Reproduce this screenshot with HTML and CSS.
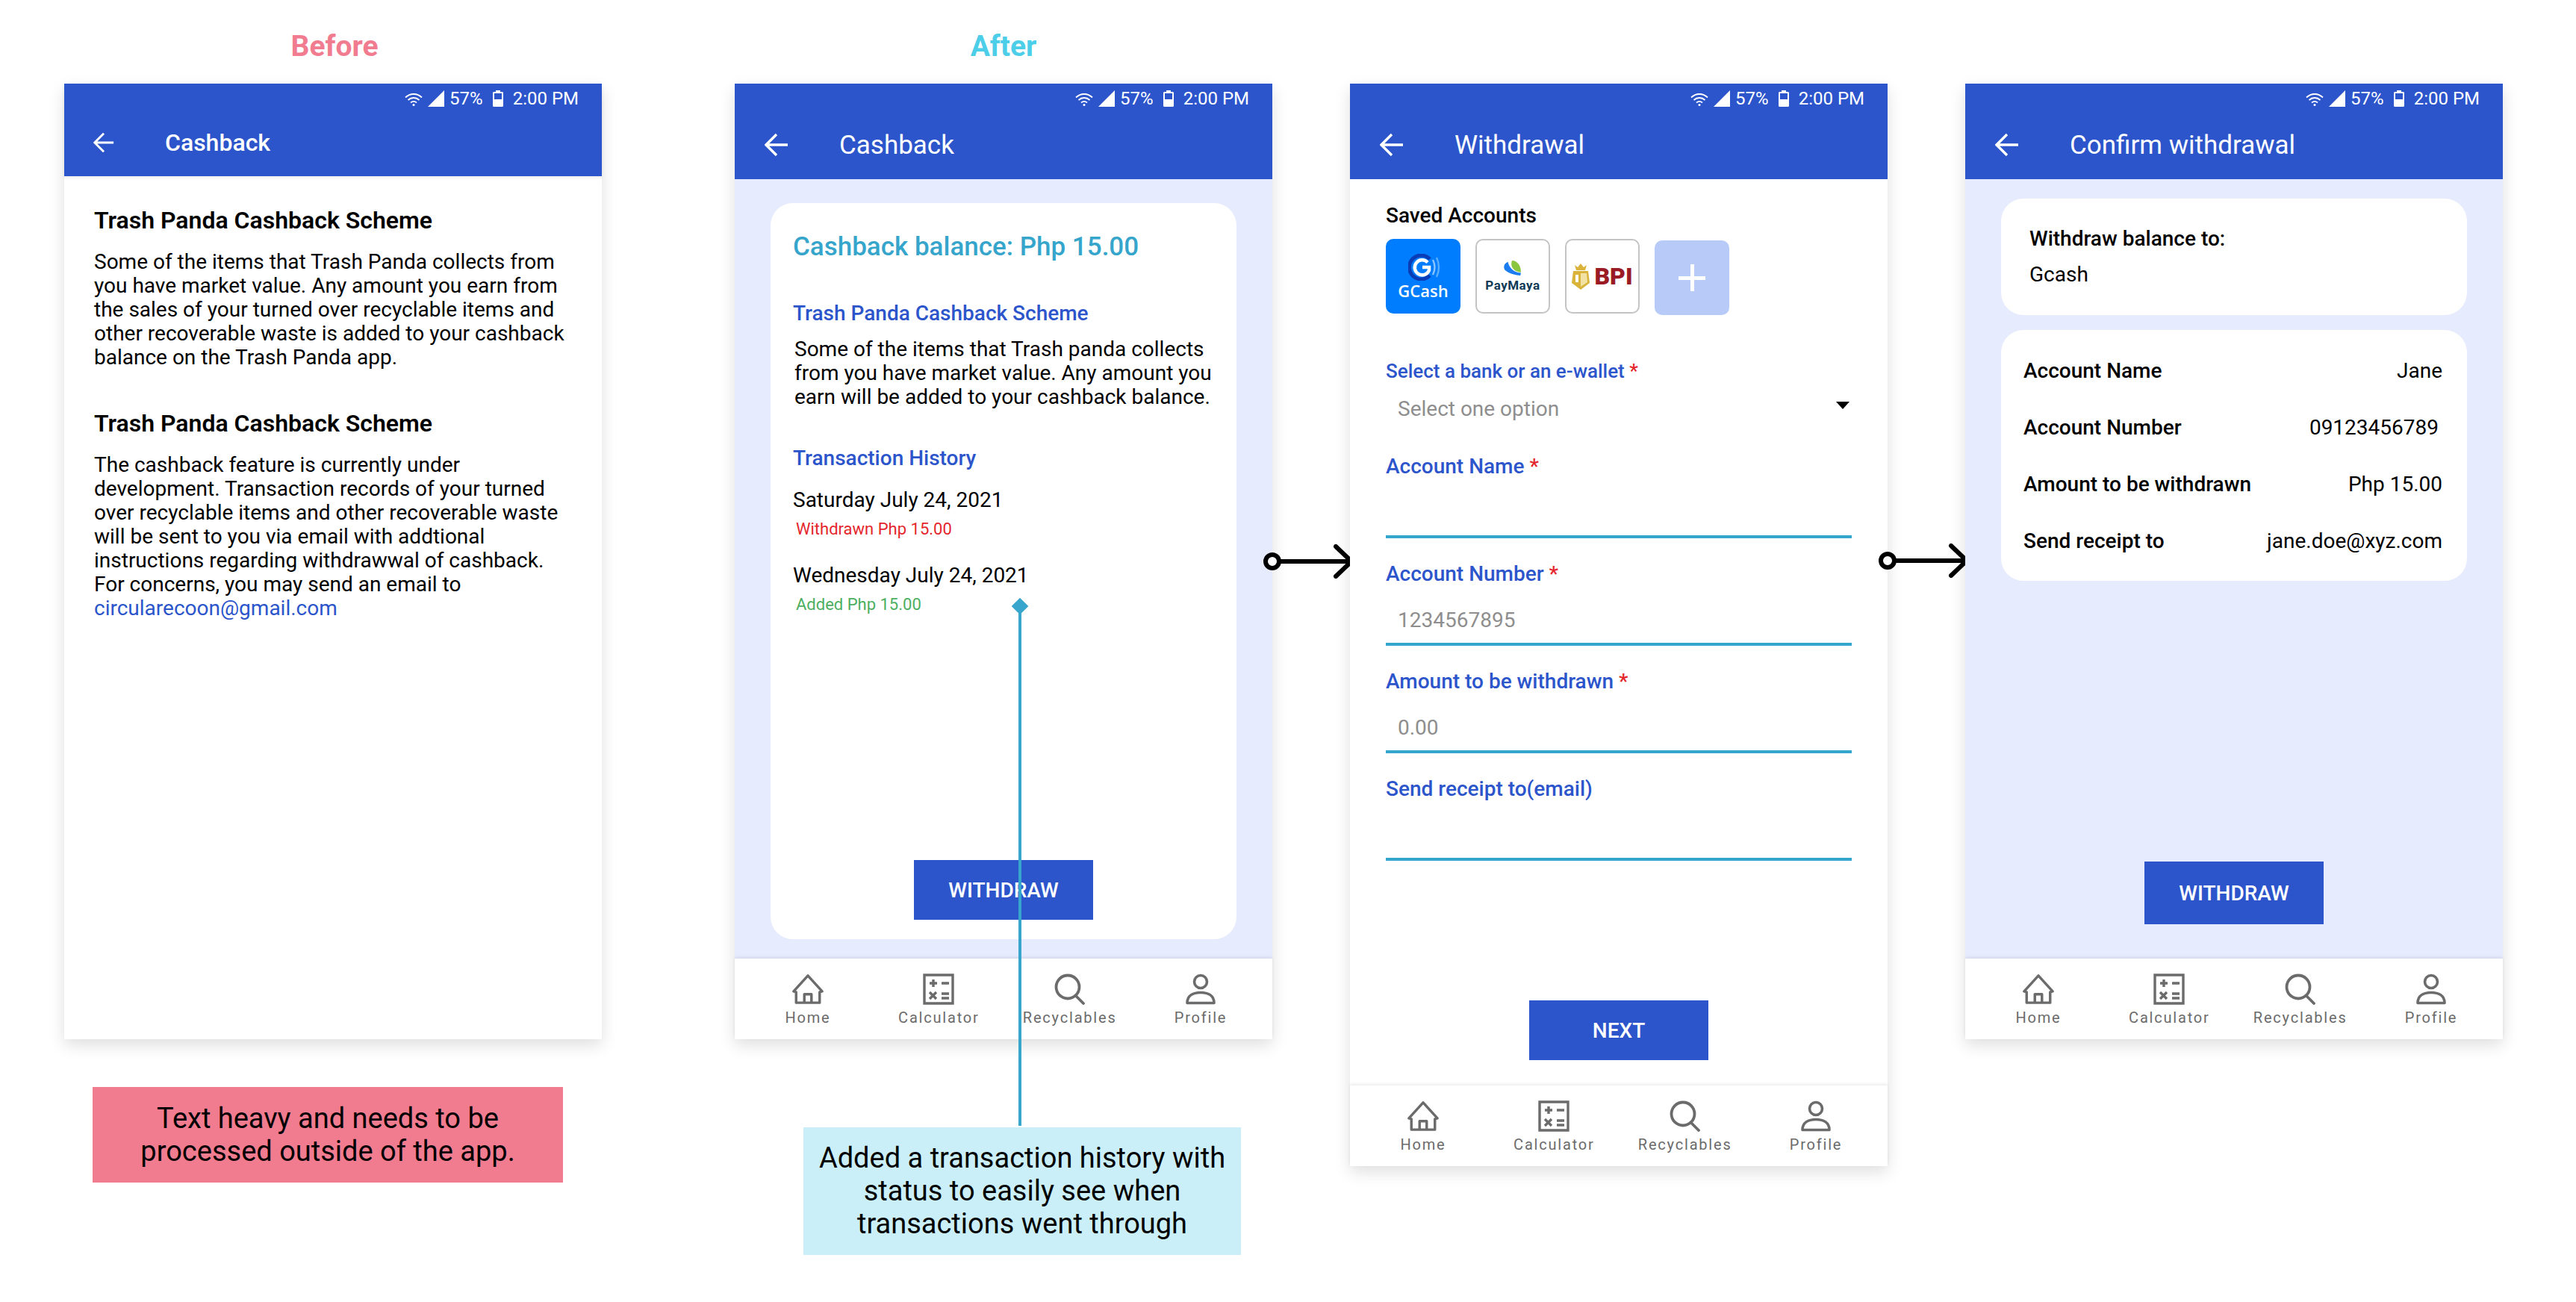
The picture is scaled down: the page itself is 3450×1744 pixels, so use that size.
FILE: index.html
```html
<!DOCTYPE html>
<html lang="en">
<head>
  <meta charset="UTF-8">
  <title>Cashback redesign</title>
  <link rel="stylesheet" href="styles.css">
</head>
<body>
  <svg class="sprite" width="0" height="0">
    <symbol id="i-wifi" viewBox="0 0 24 18">
      <path d="M1 6.500C7.500 .5 16.500 .5 23 6.500M4.500 10c4.500-4 10.500-4 15 0M8 13.500c2.500-2 5.500-2 8 0" fill="none" stroke="#fff" stroke-width="1.800"/>
      <circle cx="12" cy="16.500" r="1.500" fill="#fff"/>
    </symbol>
    <symbol id="i-signal" viewBox="0 0 22 22">
      <path d="M22 0V22H0Z" fill="#fff"/>
    </symbol>
    <symbol id="i-battery" viewBox="0 0 14 22">
      <path d="M4 0H10V2H12.500Q14 2 14 3.500V20.500Q14 22 12.500 22H1.500Q0 22 0 20.500V3.500Q0 2 1.500 2H4Z" fill="#fff"/>
      <rect x="2" y="4" width="10" height="8" fill="#2c55cc"/>
    </symbol>
    <symbol id="i-back" viewBox="0 0 32 32">
      <path d="M31 16H3M16 2 2 16l14 14" fill="none" stroke="#fff" stroke-width="3.400"/>
    </symbol>
    <symbol id="i-home" viewBox="0 0 44 42">
      <path d="M22 2 2 24l3.500 1V40h33V25l3.500-1ZM17 40V28h10v12" fill="none" stroke="#6b6b6b" stroke-width="3.600" stroke-linejoin="round"/>
    </symbol>
    <symbol id="i-calc" viewBox="0 0 42 42">
      <path d="M2 2H40V40H2ZM9 13h10M14 8v10M25 13h10M9 25l9 9M18 25l-9 9M25 27h10M25 33h10" fill="none" stroke="#6b6b6b" stroke-width="3.400"/>
    </symbol>
    <symbol id="i-search" viewBox="0 0 42 42">
      <circle cx="18" cy="18" r="15.500" fill="none" stroke="#6b6b6b" stroke-width="3.800"/>
      <path d="M29 30 39 40" fill="none" stroke="#6b6b6b" stroke-width="3.800" stroke-linecap="round"/>
    </symbol>
    <symbol id="i-profile" viewBox="0 0 42 42">
      <circle cx="21" cy="11" r="8.500" fill="none" stroke="#6b6b6b" stroke-width="3.600"/>
      <path d="M3 39.500c0-10 8-14 18-14s18 4 18 14Z" fill="none" stroke="#6b6b6b" stroke-width="3.600" stroke-linejoin="round"/>
    </symbol>
    <symbol id="i-connect" viewBox="0 0 124 46">
      <circle cx="12" cy="23" r="9" fill="#fff" stroke="#000" stroke-width="6"/>
      <path d="M21 23H118M97 3l21 20-21 20" fill="none" stroke="#000" stroke-width="6" stroke-linecap="round" stroke-linejoin="round"/>
    </symbol>
  </svg>

  <div class="board">
    <!-- before -->
    <section class="col col-before">
      <h1 class="col-label label-before">Before</h1>
      <div class="phone">
        <header class="appbar appbar-old">
          <div class="status">
            <svg class="st-wifi"><use href="#i-wifi"/></svg>
            <svg class="st-signal"><use href="#i-signal"/></svg>
            <span class="st-pct">57%</span>
            <svg class="st-batt"><use href="#i-battery"/></svg>
            <span class="st-time">2:00 PM</span>
          </div>
          <div class="titlebar">
            <svg class="back"><use href="#i-back"/></svg>
            <span class="title">Cashback</span>
          </div>
        </header>
        <main class="old-body">
          <h2>Trash Panda Cashback Scheme</h2>
          <p>Some of the items that Trash Panda collects from<br>you have market value. Any amount you earn from<br>the sales of your turned over recyclable items and<br>other recoverable waste is added to your cashback<br>balance on the Trash Panda app.</p>
          <h2 class="old-second">Trash Panda Cashback Scheme</h2>
          <p>The cashback feature is currently under<br>development. Transaction records of your turned<br>over recyclable items and other recoverable waste<br>will be sent to you via email with addtional<br>instructions regarding withdrawwal of cashback.<br>For concerns, you may send an email to<br><a class="mail" href="#">circularecoon@gmail.com</a></p>
        </main>
      </div>
      <div class="note note-pink">Text heavy and needs to be<br>processed outside of the app.</div>
    </section>

    <!-- after: cashback -->
    <section class="col col-after">
      <h1 class="col-label label-after">After</h1>
      <div class="phone">
        <header class="appbar">
          <div class="status">
            <svg class="st-wifi"><use href="#i-wifi"/></svg>
            <svg class="st-signal"><use href="#i-signal"/></svg>
            <span class="st-pct">57%</span>
            <svg class="st-batt"><use href="#i-battery"/></svg>
            <span class="st-time">2:00 PM</span>
          </div>
          <div class="titlebar">
            <svg class="back"><use href="#i-back"/></svg>
            <span class="title">Cashback</span>
          </div>
        </header>
        <main class="lilac lilac-cashback">
          <div class="card card-cashback">
            <div class="balance">Cashback balance: Php 15.00</div>
            <h3 class="blue-head scheme-head">Trash Panda Cashback Scheme</h3>
            <p class="scheme-text">Some of the items that Trash panda collects<br>from you have market value. Any amount you<br>earn will be added to your cashback balance.</p>
            <h3 class="blue-head history-head">Transaction History</h3>
            <div class="tx">
              <div class="tx-date">Saturday July 24, 2021</div>
              <div class="tx-amt tx-out">Withdrawn Php 15.00</div>
            </div>
            <div class="tx">
              <div class="tx-date">Wednesday July 24, 2021</div>
              <div class="tx-amt tx-in">Added Php 15.00</div>
            </div>
            <button class="btn btn-cashback">WITHDRAW</button>
          </div>
        </main>
        <nav class="tabs">
          <div class="tab"><svg class="tab-icon"><use href="#i-home"/></svg><span>Home</span></div>
          <div class="tab"><svg class="tab-icon"><use href="#i-calc"/></svg><span>Calculator</span></div>
          <div class="tab"><svg class="tab-icon"><use href="#i-search"/></svg><span>Recyclables</span></div>
          <div class="tab"><svg class="tab-icon"><use href="#i-profile"/></svg><span>Profile</span></div>
        </nav>
      </div>
      <div class="note note-blue">Added a transaction history with<br>status to easily see when<br>transactions went through</div>
      <div class="pointer"></div>
      <svg class="connect"><use href="#i-connect"/></svg>
    </section>

    <!-- after: withdrawal form -->
    <section class="col col-form">
      <div class="col-label"></div>
      <div class="phone phone-tall">
        <header class="appbar">
          <div class="status">
            <svg class="st-wifi"><use href="#i-wifi"/></svg>
            <svg class="st-signal"><use href="#i-signal"/></svg>
            <span class="st-pct">57%</span>
            <svg class="st-batt"><use href="#i-battery"/></svg>
            <span class="st-time">2:00 PM</span>
          </div>
          <div class="titlebar">
            <svg class="back"><use href="#i-back"/></svg>
            <span class="title">Withdrawal</span>
          </div>
        </header>
        <main class="form-body">
          <div class="saved-title">Saved Accounts</div>
          <div class="tiles">
            <div class="tile tile-gcash">
              <svg class="gcash-mark" viewBox="0 0 44 36">
                <path d="M29 29A16 16 0 1 1 29 7" fill="none" stroke="#0a3db5" stroke-width="5"/>
                <path d="M26 11.500A10 10 0 1 0 28 22V18H19" fill="none" stroke="#fff" stroke-width="4.500"/>
                <path d="M33 8q5 10 0 20" fill="none" stroke="#8cc4ff" stroke-width="2.400"/>
                <path d="M38 5q6 13 0 26" fill="none" stroke="#5aaeff" stroke-width="2.400"/>
              </svg>
              <span class="gcash-name">GCash</span>
            </div>
            <div class="tile tile-line tile-maya">
              <svg class="maya-mark" viewBox="0 0 28 24">
                <path d="M7 2C1 4-1 11 4 15c5 4 13 6 21 7l1-4C17 18 9 12 7 2Z" fill="#1a7cf0"/>
                <path d="M13 0c7 0 13 7 13 17C18 17 9 10 13 0Z" fill="#8cc63f"/>
              </svg>
              <span class="maya-name">PayMaya</span>
            </div>
            <div class="tile tile-line tile-bpi">
              <svg class="bpi-crest" viewBox="0 0 24 36">
                <path d="M6 10 4 3l4 3 4-5 4 5 4-3-2 7Z" fill="#d9b33a"/>
                <path d="M2 11H22L24 27 12 36 0 27Z" fill="#d9b33a"/>
                <path d="M12 14h8l1 12-9 6Z" fill="#f2e2a4"/>
                <rect x="5" y="16" width="4" height="10" fill="#fff"/>
              </svg>
              <span class="bpi-name">BPI</span>
            </div>
            <div class="tile tile-add"></div>
          </div>
          <div class="field field-select">
            <label class="f-label">Select a bank or an e-wallet <b class="req">*</b></label>
            <div class="select-row"><span class="f-value">Select one option</span><i class="caret"></i></div>
          </div>
          <div class="field">
            <label class="f-label">Account Name <b class="req">*</b></label>
            <div class="f-input"></div>
          </div>
          <div class="field">
            <label class="f-label">Account Number <b class="req">*</b></label>
            <div class="f-input"><span class="f-value">1234567895</span></div>
          </div>
          <div class="field">
            <label class="f-label">Amount to be withdrawn <b class="req">*</b></label>
            <div class="f-input"><span class="f-value">0.00</span></div>
          </div>
          <div class="field">
            <label class="f-label">Send receipt to(email)</label>
            <div class="f-input"></div>
          </div>
          <button class="btn btn-next">NEXT</button>
        </main>
        <nav class="tabs">
          <div class="tab"><svg class="tab-icon"><use href="#i-home"/></svg><span>Home</span></div>
          <div class="tab"><svg class="tab-icon"><use href="#i-calc"/></svg><span>Calculator</span></div>
          <div class="tab"><svg class="tab-icon"><use href="#i-search"/></svg><span>Recyclables</span></div>
          <div class="tab"><svg class="tab-icon"><use href="#i-profile"/></svg><span>Profile</span></div>
        </nav>
      </div>
      <svg class="connect connect-2"><use href="#i-connect"/></svg>
    </section>

    <!-- after: confirm -->
    <section class="col col-confirm">
      <div class="col-label"></div>
      <div class="phone">
        <header class="appbar">
          <div class="status">
            <svg class="st-wifi"><use href="#i-wifi"/></svg>
            <svg class="st-signal"><use href="#i-signal"/></svg>
            <span class="st-pct">57%</span>
            <svg class="st-batt"><use href="#i-battery"/></svg>
            <span class="st-time">2:00 PM</span>
          </div>
          <div class="titlebar">
            <svg class="back"><use href="#i-back"/></svg>
            <span class="title">Confirm withdrawal</span>
          </div>
        </header>
        <main class="lilac lilac-confirm">
          <div class="card card-to">
            <div class="to-head">Withdraw balance to:</div>
            <div class="to-val">Gcash</div>
          </div>
          <div class="card card-summary">
            <div class="row"><b>Account Name</b><span>Jane</span></div>
            <div class="row"><b>Account Number</b><span class="row-num">09123456789</span></div>
            <div class="row"><b>Amount to be withdrawn</b><span>Php 15.00</span></div>
            <div class="row"><b>Send receipt to</b><span>jane.doe@xyz.com</span></div>
          </div>
          <button class="btn btn-confirm">WITHDRAW</button>
        </main>
        <nav class="tabs">
          <div class="tab"><svg class="tab-icon"><use href="#i-home"/></svg><span>Home</span></div>
          <div class="tab"><svg class="tab-icon"><use href="#i-calc"/></svg><span>Calculator</span></div>
          <div class="tab"><svg class="tab-icon"><use href="#i-search"/></svg><span>Recyclables</span></div>
          <div class="tab"><svg class="tab-icon"><use href="#i-profile"/></svg><span>Profile</span></div>
        </nav>
      </div>
    </section>
  </div>
</body>
</html>
```

FILE: styles.css
```css
* {
  box-sizing: border-box;
}
body {
  margin: 0;
  background: #fff;
  color: #000;
  font-family: Roboto, sans-serif;
}
h1, h2, h3, p {
  margin: 0;
}
.sprite {
  position: absolute;
}
.board {
  display: flex;
  width: 3450px;
  height: 1744px;
  padding-left: 86px;
  overflow: hidden;
}
.col {
  position: relative;
  width: 720px;
  flex: none;
}
.col-before {
  margin-right: 178px;
}
.col-after, .col-form {
  margin-right: 104px;
}
.col-label {
  height: 112px;
  padding-top: 38px;
  font-size: 39px;
  line-height: 48px;
  font-weight: 700;
  text-align: center;
}
.label-before {
  color: #f17b8f;
  padding-left: 4px;
}
.label-after {
  color: #4ccde8;
}

/* phone frame */
.phone {
  display: flex;
  flex-direction: column;
  height: 1280px;
  background: #fff;
  box-shadow: 0 8px 20px rgba(0,0,0,0.13);
}
.phone-tall {
  height: 1450px;
}
.appbar {
  flex: none;
  height: 128px;
  background: #2c55cc;
  color: #fff;
}
.appbar-old {
  height: 124px;
  box-shadow: 0 2px 4px rgba(0,0,0,0.08);
}
.status {
  display: flex;
  align-items: center;
  justify-content: flex-end;
  height: 40px;
  padding-right: 31px;
  font-size: 24px;
}
.st-wifi {
  width: 24px;
  height: 18px;
  margin-top: 2px;
}
.st-signal {
  width: 22px;
  height: 22px;
  margin-left: 7px;
}
.st-pct {
  margin-left: 7px;
}
.st-batt {
  width: 14px;
  height: 22px;
  margin-left: 13px;
}
.st-time {
  margin-left: 13px;
}
.titlebar {
  display: flex;
  align-items: center;
  height: 84px;
  padding-left: 40px;
  font-size: 35px;
}
.back {
  width: 32px;
  height: 32px;
  margin-right: 68px;
}
.appbar-old .titlebar {
  height: 78px;
  padding-left: 39px;
  font-size: 32px;
  font-weight: 500;
}
.appbar-old .back {
  width: 28px;
  height: 28px;
  margin-right: 68px;
}

/* old screen */
.old-body {
  padding: 39px 40px 0;
  font-size: 28px;
  line-height: 32px;
}
.old-body h2 {
  font-size: 32px;
  line-height: 40px;
  font-weight: 600;
  margin-bottom: 20px;
}
.old-body .old-second {
  margin-top: 52px;
}
.mail {
  color: #2c55cc;
  text-decoration: none;
}

/* bottom tabs */
.tabs {
  flex: none;
  display: flex;
  justify-content: space-between;
  height: 108px;
  padding: 20px 16px 0 18px;
  background: #fff;
  box-shadow: 0 -2px 4px rgba(0,0,0,0.08);
  position: relative;
}
.tab {
  display: flex;
  flex-direction: column;
  align-items: center;
  width: 160px;
  color: #6b6b6b;
  font-size: 20px;
  line-height: 24px;
  letter-spacing: 1.8px;
}
.tab-icon {
  width: 42px;
  height: 42px;
  margin-bottom: 5px;
}

/* lilac screens */
.lilac {
  flex: 1;
  display: flex;
  flex-direction: column;
  background: #e6ebfd;
  padding-left: 48px;
  padding-right: 48px;
}
.lilac-cashback {
  padding-top: 32px;
  padding-bottom: 26px;
}
.lilac-confirm {
  padding-top: 26px;
}
.card {
  background: #fff;
  border-radius: 30px;
}
.card-cashback {
  flex: 1;
  display: flex;
  flex-direction: column;
  padding: 37px 30px 26px;
}
.balance {
  font-size: 35px;
  line-height: 44px;
  font-weight: 500;
  color: #36a5cb;
}
.blue-head {
  font-size: 28px;
  line-height: 32px;
  font-weight: 500;
  color: #2c55cc;
}
.scheme-head {
  margin-top: 51px;
}
.scheme-text {
  margin: 16px 0 0 2px;
  font-size: 28px;
  line-height: 32px;
}
.history-head {
  margin-top: 50px;
}
.tx {
  margin-top: 24px;
}
.tx + .tx {
  margin-top: 32px;
}
.tx-date {
  font-size: 28px;
  line-height: 32px;
}
.tx-amt {
  margin: 9px 0 0 4px;
  font-size: 22px;
  line-height: 28px;
}
.tx-out {
  color: #e4262c;
}
.tx-in {
  color: #4caf5f;
}
.btn {
  flex: none;
  display: block;
  width: 240px;
  height: 80px;
  border: none;
  background: #2c55cc;
  color: #fff;
  font-family: inherit;
  font-size: 28px;
  font-weight: 500;
  align-self: center;
  margin-top: auto;
}
.card-to {
  height: 156px;
  padding: 38px 38px 0;
  font-size: 28px;
  line-height: 32px;
}
.to-head {
  font-weight: 500;
}
.to-val {
  margin-top: 16px;
}
.card-summary {
  margin-top: 20px;
  height: 336px;
  padding: 16px 33px 0 30px;
  font-size: 28px;
}
.row {
  display: flex;
  justify-content: space-between;
  align-items: center;
  height: 76px;
}
.row b {
  font-weight: 500;
}
.row-num {
  margin-right: 5px;
}
.btn-confirm {
  height: 84px;
  margin-bottom: 46px;
}

/* withdrawal form */
.form-body {
  flex: 1;
  display: flex;
  flex-direction: column;
  padding: 33px 48px 34px;
}
.saved-title {
  font-size: 28px;
  line-height: 32px;
  font-weight: 500;
}
.tiles {
  display: flex;
  gap: 20px;
  margin-top: 15px;
}
.tile {
  position: relative;
  width: 100px;
  height: 100px;
  border-radius: 10px;
  display: flex;
  flex-direction: column;
  align-items: center;
}
.tile-gcash {
  background: #007dff;
  padding-top: 20px;
}
.gcash-mark {
  width: 44px;
  height: 36px;
  margin-left: 4px;
}
.gcash-name {
  color: #fff;
  font-family: "Open Sans", sans-serif;
  font-size: 22px;
  line-height: 26px;
  font-weight: 600;
}
.tile-line {
  border: 2px solid #c4c4c4;
  background: #fff;
}
.tile-maya {
  padding-top: 27px;
}
.maya-mark {
  width: 26px;
  height: 22px;
}
.maya-name {
  color: #0f3a55;
  font-size: 17px;
  line-height: 24px;
  font-weight: 700;
  letter-spacing: 0.5px;
  margin-top: -1px;
}
.tile-bpi {
  flex-direction: row;
  justify-content: center;
  gap: 6px;
}
.bpi-crest {
  width: 24px;
  height: 36px;
}
.bpi-name {
  color: #9a1b23;
  font-size: 32px;
  font-weight: 900;
}
.tile-add {
  margin-top: 2px;
  background: #b8cbf8;
}
.tile-add::before, .tile-add::after {
  content: "";
  position: absolute;
  background: #fff;
}
.tile-add::before {
  left: 32px;
  top: 48px;
  width: 36px;
  height: 5px;
}
.tile-add::after {
  left: 48px;
  top: 32px;
  width: 5px;
  height: 36px;
}
.f-label {
  display: block;
  color: #2c55cc;
  font-size: 28px;
  line-height: 32px;
  font-weight: 500;
}
.req {
  color: #e4262c;
  font-weight: 500;
}
.f-value {
  color: #8e8e8e;
  font-size: 28px;
  line-height: 32px;
  padding-left: 16px;
}
.field-select {
  margin-top: 59px;
}
.field-select .f-label {
  font-size: 26px;
}
.select-row {
  display: flex;
  align-items: center;
  justify-content: space-between;
  margin-top: 19px;
  height: 32px;
  padding-right: 3px;
}
.caret {
  width: 0;
  height: 0;
  margin-top: -10px;
  border-left: 9px solid transparent;
  border-right: 9px solid transparent;
  border-top: 10px solid #000;
}
.field {
  margin-bottom: 34px;
}
.field-select {
  margin-bottom: 47px;
}
.f-input {
  display: flex;
  align-items: flex-end;
  height: 80px;
  padding-bottom: 14px;
  border-bottom: 4px solid #36a5cb;
}
.field + .field {
  margin-top: -2px;
}
.btn-next {
  margin-bottom: 0;
}

/* annotations */
.note {
  display: flex;
  align-items: center;
  justify-content: center;
  text-align: center;
  font-size: 38px;
  line-height: 44px;
}
.note-pink {
  width: 630px;
  height: 128px;
  margin: 64px 0 0 38px;
  background: #f17b8f;
}
.note-blue {
  width: 586px;
  height: 171px;
  margin: 118px 0 0 92px;
  padding-bottom: 2px;
  background: #caeff8;
}
.pointer {
  position: absolute;
  left: 380px;
  top: 812px;
  width: 4px;
  height: 696px;
  background: #38a6cc;
}
.pointer::before {
  content: "";
  position: absolute;
  left: -6px;
  top: -8px;
  width: 16px;
  height: 16px;
  background: #38a6cc;
  transform: rotate(45deg);
}
.connect {
  position: absolute;
  left: 708px;
  top: 729px;
  width: 124px;
  height: 46px;
}
.connect-2 {
  top: 728px;
}
```
